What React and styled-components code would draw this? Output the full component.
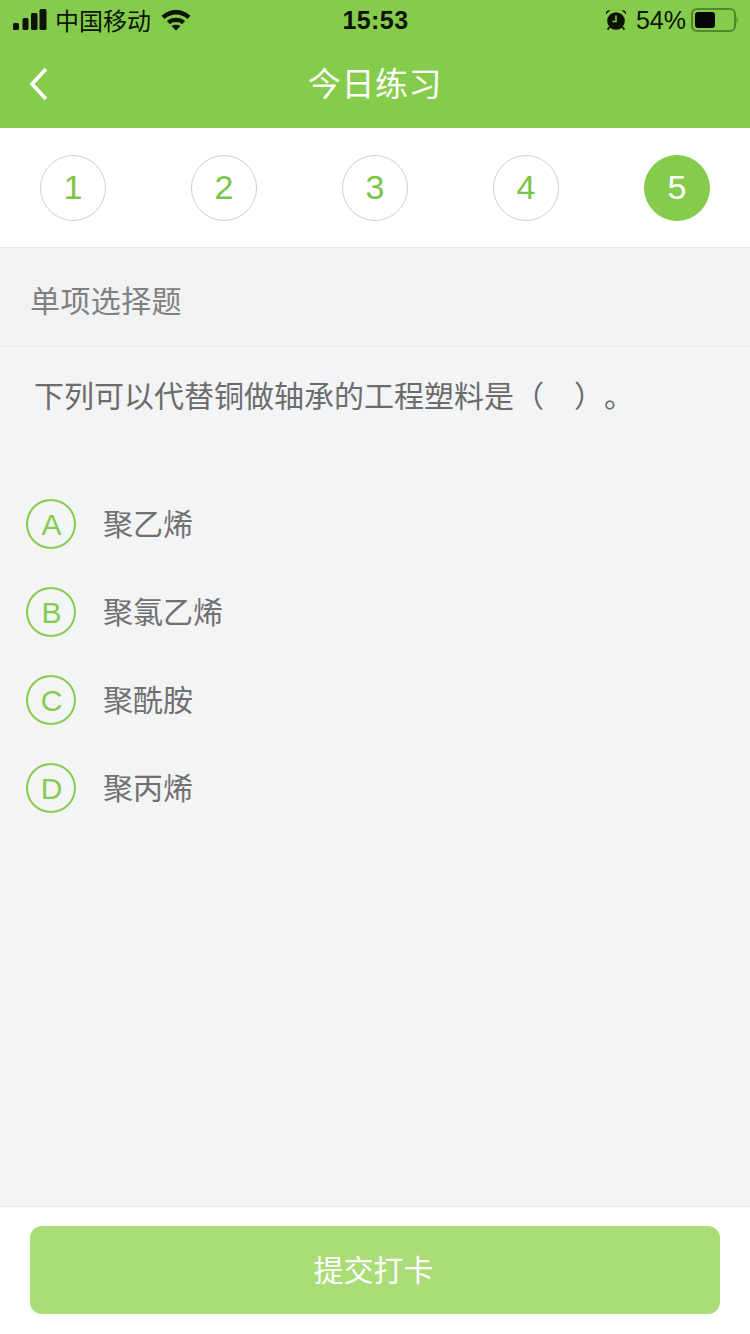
import React from "react";
import styled, {createGlobalStyle} from "styled-components";

const GlobalStyle = createGlobalStyle`
  html, body {
    margin: 0;
    padding: 0;
    background: #f3f4f6;
  }
  * {
    box-sizing: border-box;
  }
`;

const FONT = `"Liberation Sans", "Noto Sans CJK SC", sans-serif`;
const CJK = `"Noto Sans CJK SC", sans-serif`;

const Page = styled.div`
  width: 750px;
  height: 1334px;
  display: flex;
  flex-direction: column;
  background: #f3f4f6;
  font-family: ${FONT};
  overflow: hidden;
`;

const Header = styled.header`
  height: 128px;
  background: #86cc4c;
  flex-shrink: 0;
`;

const StatusBar = styled.div`
  height: 40px;
  display: grid;
  grid-template-columns: 1fr auto 1fr;
  align-items: center;
  padding: 0 12px 0 13px;
  color: #0c1408;
`;

const StatusLeft = styled.div`
  display: flex;
  align-items: center;
`;

const Carrier = styled.span`
  font-family: ${CJK};
  font-size: 24px;
  line-height: 40px;
  margin-left: 8px;
  margin-right: 10px;
`;

const Clock = styled.span`
  font-size: 25px;
  font-weight: 700;
  letter-spacing: 0.4px;
`;

const StatusRight = styled.div`
  display: flex;
  align-items: center;
  justify-content: flex-end;
`;

const Percent = styled.span`
  font-size: 25px;
  margin: 0 4px 0 9px;
`;

const NavBar = styled.div`
  position: relative;
  height: 88px;
  display: flex;
  align-items: center;
  justify-content: center;
  padding-bottom: 5px;
`;

const BackButton = styled.svg`
  position: absolute;
  left: 28px;
  top: 27px;
`;

const Title = styled.h1`
  margin: 0;
  font-family: ${CJK};
  font-size: 33px;
  font-weight: 400;
  letter-spacing: 0.6px;
  color: #fff;
`;

const Steps = styled.div`
  height: 120px;
  flex-shrink: 0;
  background: #fff;
  border-bottom: 1px solid #e8e9eb;
  display: flex;
  align-items: center;
  justify-content: space-between;
  padding: 0 40px;
`;

const Step = styled.div`
  width: 66px;
  height: 66px;
  border-radius: 50%;
  display: flex;
  align-items: center;
  justify-content: center;
  font-size: 34px;
  color: ${({$active}) => ($active ? "#fff" : "#7cc449")};
  background: ${({$active}) => ($active ? "#86cc4c" : "#fff")};
  border: 1px solid ${({$active}) => ($active ? "#86cc4c" : "#cfcfcf")};
`;

const SectionLabel = styled.div`
  height: 99px;
  flex-shrink: 0;
  display: flex;
  align-items: center;
  padding: 4px 0 0 30px;
  background: #f1f2f4;
  border-bottom: 1px solid #e6e7e9;
  font-family: ${CJK};
  font-size: 30px;
  letter-spacing: 0.4px;
  color: #808080;
`;

const Question = styled.p`
  margin: 0;
  padding: 24px 0 0 34px;
  height: 133px;
  flex-shrink: 0;
  font-family: ${CJK};
  font-size: 30px;
  line-height: 46px;
  color: #6c6c6c;
  white-space: pre;
  text-spacing-trim: space-all;
`;

const Options = styled.div`
  display: flex;
  flex-direction: column;
  padding-left: 26px;
  flex: 1;
`;

const Option = styled.div`
  height: 88px;
  display: flex;
  align-items: center;
  gap: 27px;
`;

const Letter = styled.div`
  width: 50px;
  height: 50px;
  border-radius: 50%;
  border: 2px solid #86cc4c;
  display: flex;
  align-items: center;
  justify-content: center;
  padding: 1px 0 0 1px;
  font-size: 30px;
  color: #86cc4c;
`;

const OptionText = styled.span`
  font-family: ${CJK};
  font-size: 30px;
  color: #707070;
  position: relative;
  top: -2px;
`;

const Footer = styled.footer`
  height: 128px;
  flex-shrink: 0;
  background: #fff;
  border-top: 1px solid #e6e7ea;
  padding: 19px 30px 0;
`;

const Submit = styled.button`
  display: block;
  width: 690px;
  height: 88px;
  border: 0;
  border-radius: 12px;
  background: #aadc78;
  color: #fff;
  font-family: ${CJK};
  font-size: 30px;
  padding: 0 3px 4px 0;
`;

const SignalIcon = () => (
  <svg width="34" height="22" viewBox="0 0 34 22" fill="#0c1408">
    <rect x="0" y="14" width="6" height="7" rx="1.5" />
    <rect x="9.5" y="9" width="6" height="12" rx="1.5" />
    <rect x="18" y="4" width="6.5" height="17" rx="1.5" />
    <rect x="26.5" y="0" width="7" height="21" rx="1.5" />
  </svg>
);

const WifiIcon = () => (
  <svg width="30" height="22" viewBox="0 0 30 22" fill="none" stroke="#0c1408" strokeWidth="4.4">
    <path d="M2 8.4 C9.5 1.6 20.5 1.6 28 8.4" />
    <path d="M7.4 13.6 C11.5 10 18.5 10 22.6 13.6" />
    <path d="M15 21.5 L10.6 17.2 C13 15.4 17 15.4 19.4 17.2 Z" fill="#0c1408" stroke="none" />
  </svg>
);

const AlarmIcon = () => (
  <svg width="22" height="22" viewBox="0 0 22 22" fill="#0c1408">
    <circle cx="11" cy="12" r="8.8" />
    <path d="M1 5.5 L5 1.6 C3 .6 .4 2.6 1 5.5 Z M21 5.5 L17 1.6 C19 .6 21.6 2.6 21 5.5 Z" />
    <path d="M4.5 18 L2.6 20.6 M17.5 18 L19.4 20.6" stroke="#0c1408" strokeWidth="1.8" />
    <path d="M11 6.5 V12.4 H7.4" fill="none" stroke="#86cc4c" strokeWidth="1.5" />
  </svg>
);

const BatteryIcon = () => (
  <svg width="48" height="24" viewBox="0 0 48 24" fill="none">
    <rect x="2" y="1" width="43" height="22" rx="5" stroke="#4f8a2a" strokeWidth="2" />
    <rect x="5" y="4" width="20" height="16" rx="3" fill="#050505" />
    <path d="M46.5 8.5 C48 9.5 48 14.5 46.5 15.5 Z" fill="#4f8a2a" />
  </svg>
);

const steps = ["1", "2", "3", "4", "5"];
const options = [
  {key: "A", text: "聚乙烯"},
  {key: "B", text: "聚氯乙烯"},
  {key: "C", text: "聚酰胺"},
  {key: "D", text: "聚丙烯"},
];

export default function App() {
  return (
    <Page>
      <GlobalStyle />
      <Header>
        <StatusBar>
          <StatusLeft>
            <SignalIcon />
            <Carrier>中国移动</Carrier>
            <WifiIcon />
          </StatusLeft>
          <Clock>15:53</Clock>
          <StatusRight>
            <AlarmIcon />
            <Percent>54%</Percent>
            <BatteryIcon />
          </StatusRight>
        </StatusBar>
        <NavBar>
          <BackButton width="22" height="34" viewBox="0 0 22 34" fill="none" stroke="#fff" strokeWidth="3.6">
            <path d="M18 2 L4 17 L18 32" />
          </BackButton>
          <Title>今日练习</Title>
        </NavBar>
      </Header>
      <Steps>
        {steps.map((n, i) => (
          <Step key={n} $active={i === steps.length - 1}>{n}</Step>
        ))}
      </Steps>
      <SectionLabel>单项选择题</SectionLabel>
      <Question>下列可以代替铜做轴承的工程塑料是（　）。</Question>
      <Options>
        {options.map((o) => (
          <Option key={o.key}>
            <Letter>{o.key}</Letter>
            <OptionText>{o.text}</OptionText>
          </Option>
        ))}
      </Options>
      <Footer>
        <Submit>提交打卡</Submit>
      </Footer>
    </Page>
  );
}
